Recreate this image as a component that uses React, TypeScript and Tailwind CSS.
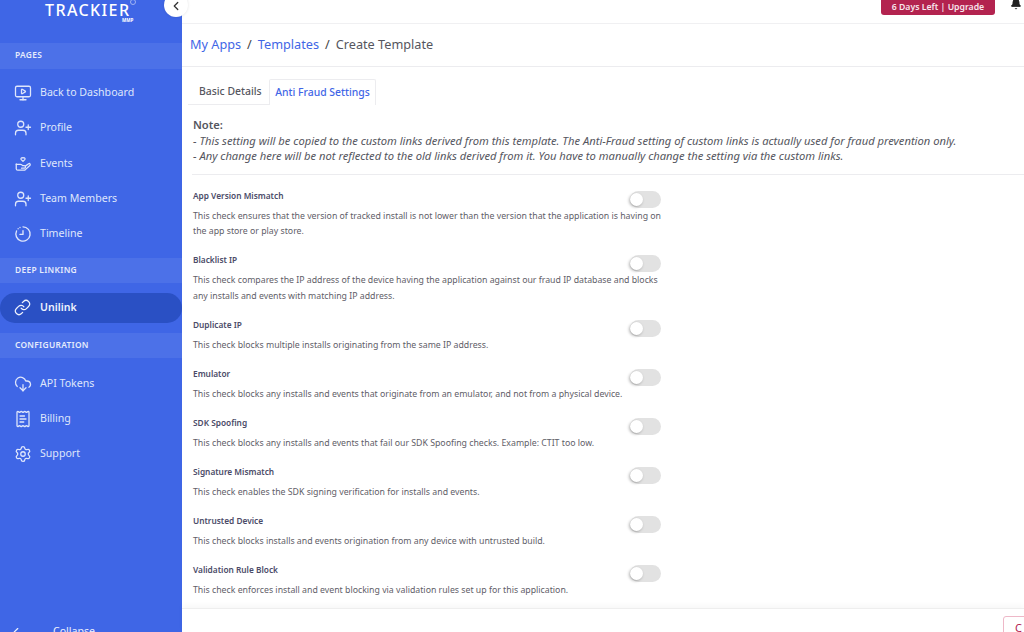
import React from "react";
import {
  MonitorPlay,
  UserPlus,
  Link,
  CloudDownload,
  ReceiptText,
  Settings,
  ChevronLeft,
  Bell,
} from "lucide-react";

const TimelineIcon = () => (
  <svg width="18" height="18" viewBox="0 0 24 24" fill="none" stroke="currentColor" strokeWidth="1.8" strokeLinecap="round" strokeLinejoin="round">
    <path d="M12 2.5a9.5 9.5 0 1 1-8.6 5.4" />
    <path d="M5.5 5l.01 0M8 3.3l.01 0" />
    <path d="M12 7.5V12.5H8" />
  </svg>
);

const EventsIcon = () => (
  <svg width="18" height="18" viewBox="0 0 24 24" fill="none" stroke="currentColor" strokeWidth="1.7" strokeLinecap="round" strokeLinejoin="round">
    <path d="M12 8.5 9.6 6.2a1.6 1.6 0 0 1 2.4-2.1 1.6 1.6 0 0 1 2.4 2.1z" />
    <path d="M3 12.5h5.5c1.5 0 2.5.8 3 1.8h2.2a1.6 1.6 0 0 1 0 3.2H10" />
    <path d="M15.5 14.5l4-2.8c1.6-1 3 1 1.6 2.3l-5.6 5.2c-.8.7-1.6 1-2.6 1H5c-1.2 0-2-.8-2-2v-6.200" />
  </svg>
);

const rows = [
  {
    title: "App Version Mismatch",
    desc: "This check ensures that the version of tracked install is not lower than the version that the application is having on the app store or play store.",
  },
  {
    title: "Blacklist IP",
    desc: "This check compares the IP address of the device having the application against our fraud IP database and blocks any installs and events with matching IP address.",
  },
  { title: "Duplicate IP", desc: "This check blocks multiple installs originating from the same IP address." },
  { title: "Emulator", desc: "This check blocks any installs and events that originate from an emulator, and not from a physical device." },
  { title: "SDK Spoofing", desc: "This check blocks any installs and events that fail our SDK Spoofing checks. Example: CTIT too low." },
  { title: "Signature Mismatch", desc: "This check enables the SDK signing verification for installs and events." },
  { title: "Untrusted Device", desc: "This check blocks installs and events origination from any device with untrusted build." },
  { title: "Validation Rule Block", desc: "This check enforces install and event blocking via validation rules set up for this application." },
];

const NavItem = ({ icon, label }: { icon: React.ReactNode; label: string }) => (
  <div className="flex h-[35.25px] items-center pl-[14px] text-[10.6px] text-[#dfe6fb]">
    <span className="flex w-[26px] shrink-0 items-center">{icon}</span>
    {label}
  </div>
);

const SectionBand = ({ label }: { label: string }) => (
  <div className="flex h-[25.5px] shrink-0 items-center bg-[#4c71e8] pl-[15px] text-[8.4px] font-semibold tracking-[0.3px] text-[#e6ecfc]">
    {label}
  </div>
);

const Toggle = () => (
  <div className="relative h-[17px] w-[31px] shrink-0 rounded-full bg-[#e2e2e2]">
    <span className="absolute left-0 top-[2px] h-[13px] w-[13px] rounded-full bg-white shadow-[-1px_1px_3px_rgba(0,0,0,0.3)]" />
  </div>
);

export default function App() {
  return (
    <div className="flex h-[632px] w-[1024px] overflow-hidden bg-white font-['Noto_Sans',sans-serif] text-[#5a5c66]">
      <aside className="relative flex h-[632px] w-[182px] shrink-0 flex-col overflow-hidden bg-[#3f66e6]">
        <div className="relative h-[43px] shrink-0 text-white">
          <div className="pl-[45px] pt-[2px] text-[16px] font-medium leading-[16px] tracking-[1.4px]">TRACKIER</div>
          <div className="pl-[122px] text-[4.5px] font-bold leading-[5px]">MMP</div>
          <span className="absolute left-[130px] top-[-1px] h-[6px] w-[6px] rounded-full border border-[#9fb3f2]" />
        </div>
        <SectionBand label="PAGES" />
        <div className="shrink-0 pt-[7px]">
          <NavItem icon={<MonitorPlay size={18} strokeWidth={1.7} />} label="Back to Dashboard" />
          <NavItem icon={<UserPlus size={18} strokeWidth={1.7} />} label="Profile" />
          <NavItem icon={<EventsIcon />} label="Events" />
          <NavItem icon={<UserPlus size={18} strokeWidth={1.7} />} label="Team Members" />
          <NavItem icon={<TimelineIcon />} label="Timeline" />
        </div>
        <div className="mt-[6px] shrink-0">
          <SectionBand label="DEEP LINKING" />
        </div>
        <div className="mt-[9.500px] flex h-[30px] shrink-0 items-center rounded-full bg-[#2a50c4] pl-[14px] text-[10.6px] font-semibold text-[#eef2fd]">
          <span className="flex w-[26px] items-center">
            <Link size={17} strokeWidth={1.7} />
          </span>
          Unilink
        </div>
        <div className="mt-[10px] shrink-0">
          <SectionBand label="CONFIGURATION" />
        </div>
        <div className="shrink-0 pt-[8px]">
          <NavItem icon={<CloudDownload size={18} strokeWidth={1.7} />} label="API Tokens" />
          <NavItem icon={<ReceiptText size={18} strokeWidth={1.7} />} label="Billing" />
          <NavItem icon={<Settings size={18} strokeWidth={1.7} />} label="Support" />
        </div>
        <div className="mt-[152px] flex shrink-0 items-center pl-[9px] text-[10.6px] text-[#eef2fd]">
          <ChevronLeft size={14} strokeWidth={2} />
          <span className="ml-[30px]">Collapse</span>
        </div>
      </aside>

      <main className="relative flex min-w-0 flex-1 flex-col">
        <div className="absolute left-[-18px] top-[-7px] flex h-[24px] w-[24px] items-center justify-center rounded-full bg-white shadow-[0_0_3px_rgba(0,0,0,0.12)]">
          <ChevronLeft size={14} strokeWidth={2.2} className="mt-[2px] text-[#333]" />
        </div>

        <header className="flex h-[24px] shrink-0 items-start justify-end border-b border-[#f0f0f2]">
          <div className="mr-[15px] flex h-[15px] w-[114px] items-center justify-center rounded-b-[3px] bg-[#b3234f] text-[8.7px] font-semibold leading-[15px] text-[#f7e6ec]">
            6 Days Left | Upgrade
          </div>
          <Bell size={12} fill="#222" strokeWidth={1.5} className="mr-[2px] mt-[-2px] text-[#222]" />
        </header>

        <div className="flex h-[43px] shrink-0 items-center border-b border-[#ececef] pl-[8px] text-[12.7px]">
          <span className="text-[#3f66e6]">My Apps</span>
          <span className="mx-[6px] text-[#444]">/</span>
          <span className="text-[#3f66e6]">Templates</span>
          <span className="mx-[6px] text-[#444]">/</span>
          <span className="text-[#55565e]">Create Template</span>
        </div>

        <div className="mt-[12px] flex h-[26px] shrink-0 items-stretch pl-[6px] text-[10.4px] font-medium">
          <div className="flex w-[81px] items-center border-b border-[#ececef] pl-[11px] text-[#55565e]">Basic Details</div>
          <div className="flex w-[107px] items-center justify-center rounded-t-[2px] border border-b-0 border-[#ececef] text-[#3f66e6]">Anti Fraud Settings</div>
        </div>

        <div className="mx-[11px] shrink-0 pt-[12px] text-[11.2px] leading-[15.5px] text-[#55565e]">
          <div className="font-semibold">Note:</div>
          <div className="italic">- This setting will be copied to the custom links derived from this template. The Anti-Fraud setting of custom links is actually used for fraud prevention only.</div>
          <div className="italic">- Any change here will be not reflected to the old links derived from it. You have to manually change the setting via the custom links.</div>
        </div>
        <div className="ml-[10px] mt-[10px] shrink-0 border-t border-[#ececef]" />

        <div className="ml-[11px] flex w-[478px] shrink-0 flex-col pt-[14px]">
          {rows.map((row) => (
            <div key={row.title} className="pb-[13.500px]">
              <div className="flex items-start justify-between">
                <div className="text-[8.3px] font-semibold leading-[14px] text-[#4b4b68]">{row.title}</div>
                <div className="mb-[-5px] mr-[10px] mt-[2px]">
                  <Toggle />
                </div>
              </div>
              <p className="mt-[6px] text-[8.75px] leading-[15.5px] text-[#5f6068]">{row.desc}</p>
            </div>
          ))}
        </div>

        <div className="absolute bottom-0 left-0 right-0 h-[24px] border-t border-[#eeeeee] bg-white shadow-[0_-3px_5px_rgba(0,0,0,0.03)]">
          <div className="absolute left-[821px] top-[7px] h-[30px] w-[40px] rounded-[3px] border border-[#eeb8c8] pl-[11px] pt-[4px] text-[11px] leading-[14px] text-[#b3234f]">
            C
          </div>
        </div>
      </main>
    </div>
  );
}
